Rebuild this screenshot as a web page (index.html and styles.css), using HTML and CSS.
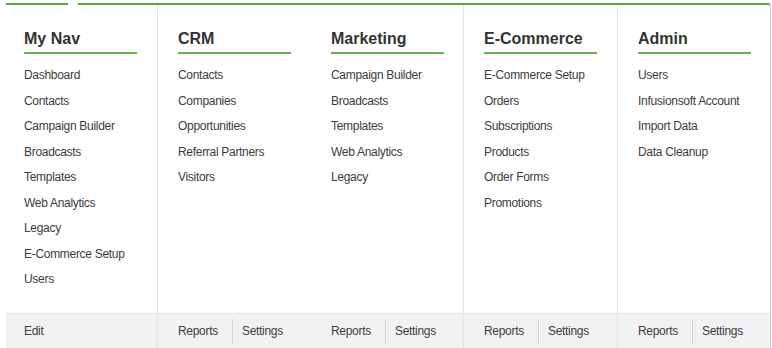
FILE: index.html
```
<html>
  <head>
    <title>nav menu</title>

    <link rel="stylesheet" href="styles.css">
  </head>

  <body>
    <div id="menu">
      <span class="notch"></span>
      <div class="col first">
        <div class="colBody">
          <h2>My Nav</h2>
          <a href="#">Dashboard</a>
          <a href="#">Contacts</a>
          <a href="#">Campaign Builder</a>
          <a href="#">Broadcasts</a>
          <a href="#">Templates</a>
          <a href="#">Web Analytics</a>
          <a href="#">Legacy</a>
          <a href="#">E-Commerce Setup</a>
          <a href="#">Users</a>
        </div>
        <div class="colFoot"><a href="#" class="single">Edit</a></div>
      </div>

      <div class="col">
        <div class="colBody">
          <h2>CRM</h2>
          <a href="#">Contacts</a>
          <a href="#">Companies</a>
          <a href="#">Opportunities</a>
          <a href="#">Referral Partners</a>
          <a href="#">Visitors</a>
        </div>
        <div class="colFoot">
          <a href="#" class="rep">Reports</a><a href="#" class="set">Settings</a>
        </div>
      </div>

      <div class="col noline">
        <div class="colBody">
          <h2>Marketing</h2>
          <a href="#">Campaign Builder</a>
          <a href="#">Broadcasts</a>
          <a href="#">Templates</a>
          <a href="#">Web Analytics</a>
          <a href="#">Legacy</a>
        </div>
        <div class="colFoot">
          <a href="#" class="rep">Reports</a><a href="#" class="set">Settings</a>
        </div>
      </div>

      <div class="col">
        <div class="colBody">
          <h2>E-Commerce</h2>
          <a href="#">E-Commerce Setup</a>
          <a href="#">Orders</a>
          <a href="#">Subscriptions</a>
          <a href="#">Products</a>
          <a href="#">Order Forms</a>
          <a href="#">Promotions</a>
        </div>
        <div class="colFoot">
          <a href="#" class="rep">Reports</a><a href="#" class="set">Settings</a>
        </div>
      </div>

      <div class="col">
        <div class="colBody">
          <h2>Admin</h2>
          <a href="#">Users</a>
          <a href="#">Infusionsoft Account</a>
          <a href="#">Import Data</a>
          <a href="#">Data Cleanup</a>
        </div>
        <div class="colFoot">
          <a href="#" class="rep">Reports</a><a href="#" class="set">Settings</a>
        </div>
      </div>
    </div>
  </body>
</html>
```

FILE: styles.css
```
body {
  margin: 0;
  padding: 3px 0 0 6px;
  background-color: white;
  font-family: "Liberation Sans", Arial, sans-serif;
  color: #333;
}
#menu {
  position: relative;
  display: grid;
  grid-template-columns: 151px 153px 153px 154px 153px;
  width: 764px;
  border-top: 2px solid #5aa83a;
  border-right: 1px solid #d0d0d0;
  border-top-right-radius: 3px;
  background-color: white;
}
.notch {
  position: absolute;
  top: -2px;
  left: 62px;
  width: 10px;
  height: 2px;
  background-color: white;
}
.col {
  display: flex;
  flex-direction: column;
  border-left: 1px solid #e4e4e4;
}
.col.first {
  border-left: none;
}
.col.noline {
  border-left: none;
}
.colBody {
  flex: 1;
  padding: 24px 0 20px 20px;
}
.first .colBody {
  padding-left: 18px;
}
.noline .colBody {
  padding-left: 21px;
}
h2 {
  margin: 0 0 9px 0;
  width: 113px;
  padding-bottom: 3px;
  border-bottom: 2px solid #6ab04c;
  font-size: 16px;
  line-height: 20px;
  font-weight: bold;
  color: #333;
}
.colBody a {
  display: block;
  font-size: 12px;
  line-height: 25.5px;
  letter-spacing: -0.3px;
  color: #3c3c3c;
  text-decoration: none;
}
.colFoot {
  display: flex;
  align-items: center;
  height: 36px;
  padding-left: 20px;
  background-color: #f2f2f2;
  border-top: 1px solid #e2e2e2;
}
.first .colFoot {
  padding-left: 18px;
}
.noline .colFoot {
  padding-left: 21px;
}
.colFoot a {
  font-size: 12px;
  line-height: 25px;
  letter-spacing: -0.3px;
  color: #3c3c3c;
  text-decoration: none;
}
.colFoot .rep {
  padding-right: 14px;
  border-right: 1px solid #d2d2d2;
}
.colFoot .set {
  padding-left: 9px;
}
```
